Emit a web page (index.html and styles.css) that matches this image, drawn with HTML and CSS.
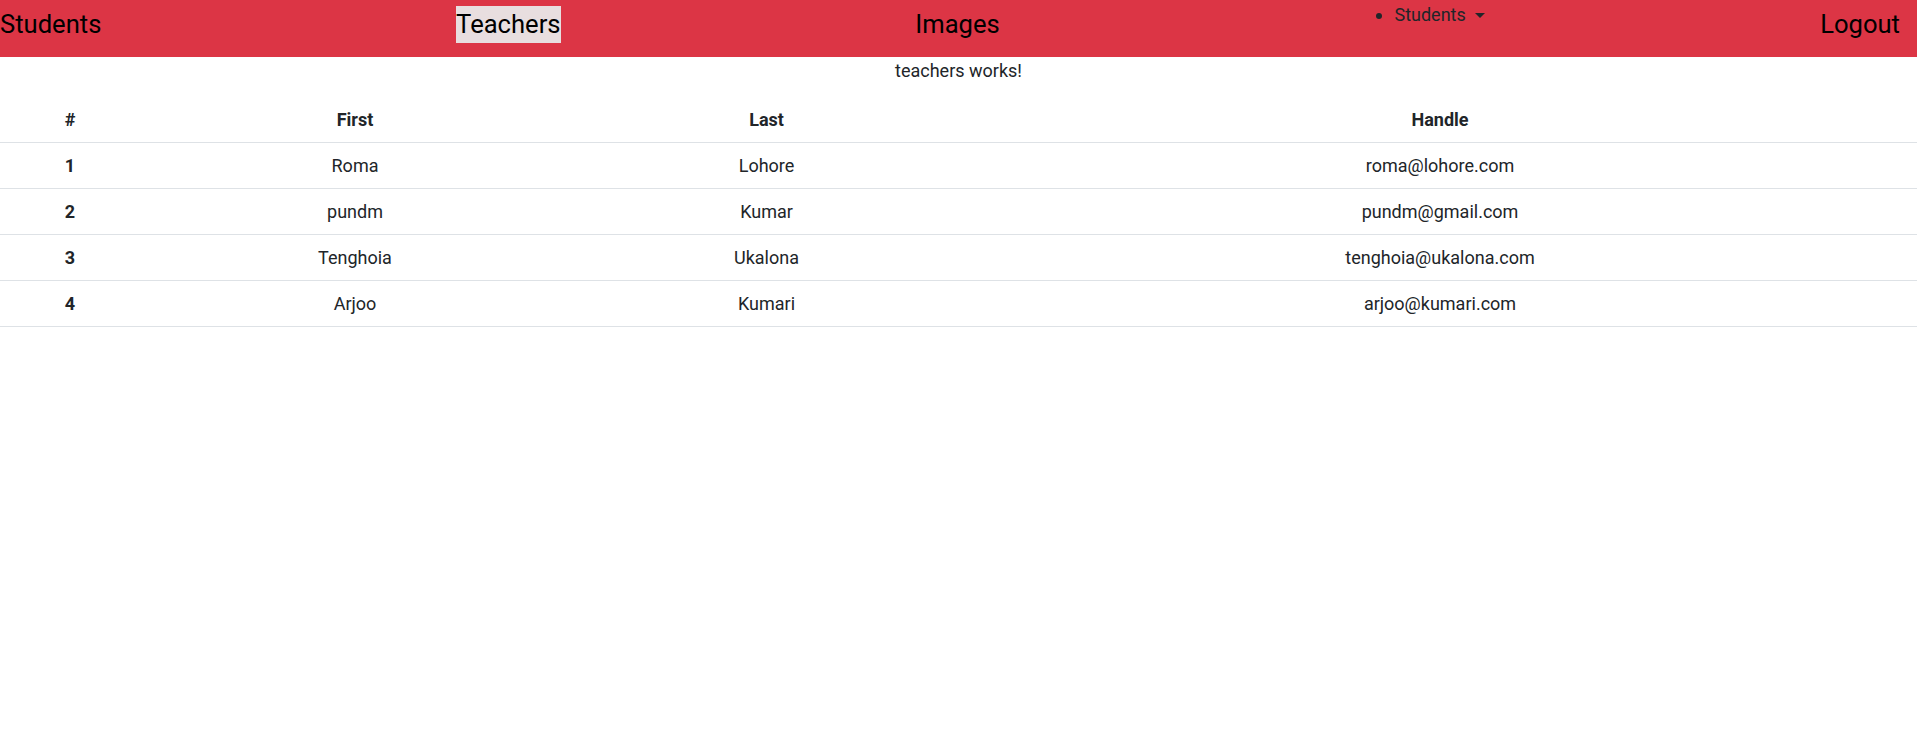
FILE: index.html
```html
<!DOCTYPE html>
<html lang="en">
<head>
<meta charset="utf-8">
<title>Teachers</title>
<link rel="stylesheet" href="styles.css">
</head>
<body>
<nav class="navbar">
  <a class="nav-link">Students</a>
  <a class="nav-link active">Teachers</a>
  <a class="nav-link">Images</a>
  <ul class="dropdown">
    <li><span class="dropdown-toggle">Students</span></li>
  </ul>
  <a class="nav-link logout">Logout</a>
</nav>
<p class="message">teachers works!</p>
<table class="table">
  <colgroup>
    <col class="c-num">
    <col class="c-first">
    <col class="c-last">
    <col>
  </colgroup>
  <thead>
    <tr><th>#</th><th>First</th><th>Last</th><th>Handle</th></tr>
  </thead>
  <tbody>
    <tr><th>1</th><td>Roma</td><td>Lohore</td><td>roma@lohore.com</td></tr>
    <tr><th>2</th><td>pundm</td><td>Kumar</td><td>pundm@gmail.com</td></tr>
    <tr><th>3</th><td>Tenghoia</td><td>Ukalona</td><td>tenghoia@ukalona.com</td></tr>
    <tr><th>4</th><td>Arjoo</td><td>Kumari</td><td>arjoo@kumari.com</td></tr>
  </tbody>
</table>
</body>
</html>
```
FILE: styles.css
```css
* { box-sizing: border-box; }
html, body { margin: 0; padding: 0; }
body {
  font-family: Roboto, "Liberation Sans", Arial, sans-serif;
  font-size: 18px;
  line-height: 1.5;
  color: #212529;
  background: #fff;
}
.navbar {
  display: flex;
  justify-content: space-between;
  align-items: flex-start;
  height: 57px;
  background: #dc3545;
  padding-right: 17px;
}
.nav-link {
  display: block;
  margin-top: 6px;
  font-size: 25.6px;
  line-height: 37px;
  color: #000;
  cursor: pointer;
}
.nav-link.active {
  background: #e8dedf;
}
.dropdown {
  margin: 1px 0 0;
  padding-left: 40px;
  width: 111px;
  list-style: disc;
  white-space: nowrap;
  color: #212529;
  font-size: 18px;
  line-height: 27px;
}
.dropdown-toggle::after {
  content: "";
  display: inline-block;
  margin-left: 9px;
  vertical-align: 3px;
  border-top: 5px solid #212529;
  border-left: 5px solid transparent;
  border-right: 5px solid transparent;
}
.message {
  margin: 0 0 13px;
  text-align: center;
  line-height: 27px;
}
.table {
  width: 100%;
  border-collapse: collapse;
  table-layout: fixed;
}
.c-num { width: 140px; }
.c-first { width: 430px; }
.c-last { width: 393px; }
.table th, .table td {
  padding: 9px 0;
  text-align: center;
  line-height: 27px;
  border-bottom: 1px solid #dee2e6;
}
.table th { font-weight: 700; }
```
